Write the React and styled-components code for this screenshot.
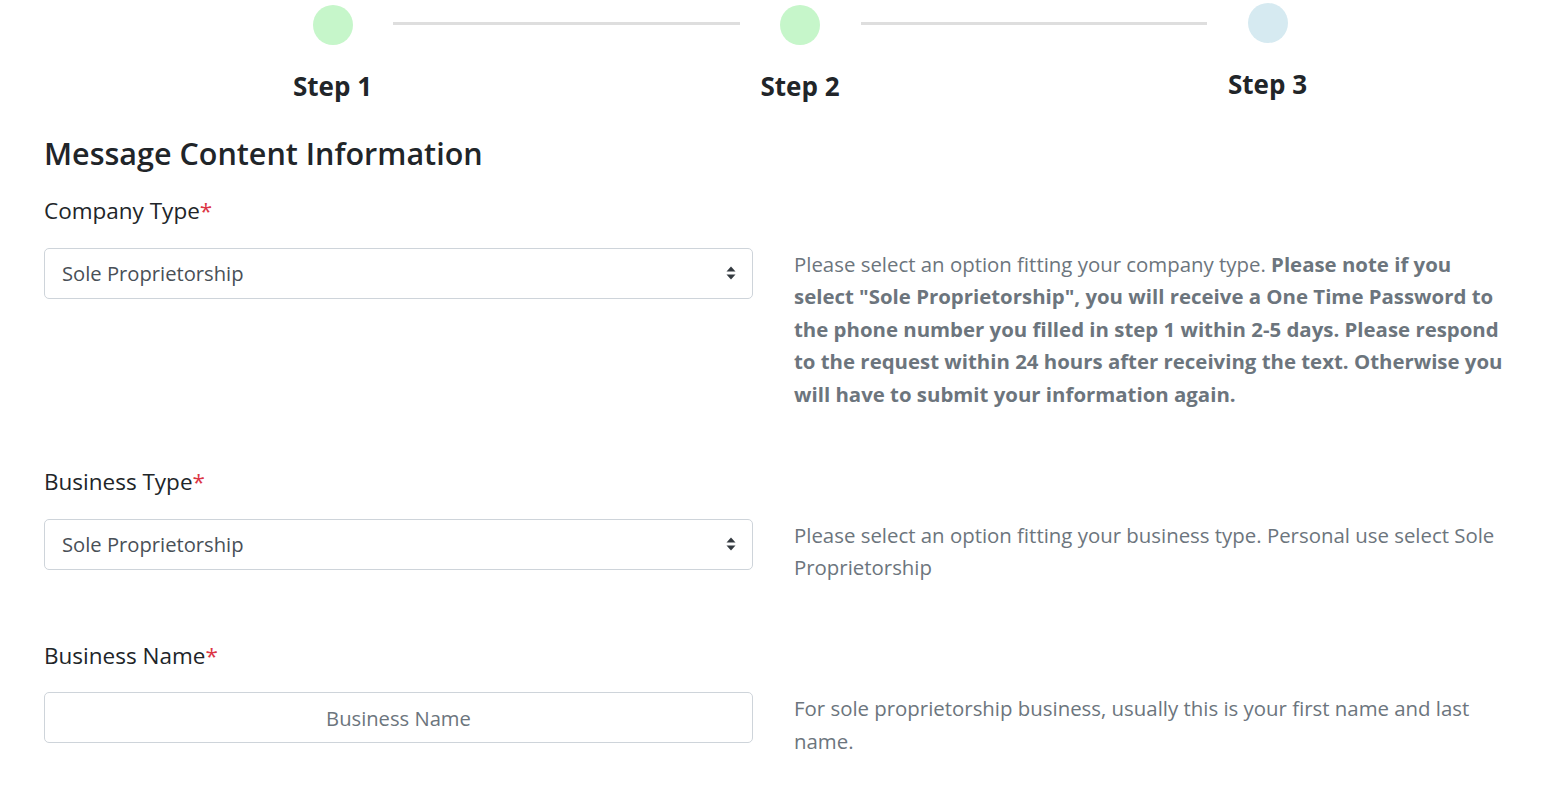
import React from "react";
import styled, { createGlobalStyle } from "styled-components";

const Global = createGlobalStyle`
  html, body { margin: 0; padding: 0; background: #fff; }
  body {
    font-family: "Open Sans", "Noto Sans", "Liberation Sans", sans-serif;
    color: #212529;
  }
  * { box-sizing: border-box; }
`;

const Page = styled.div`
  padding: 0 44px 40px 44px;
`;

const Stepper = styled.div`
  display: flex;
  align-items: flex-start;
  margin-left: 228px;
  width: 1056px;
`;

const StepItem = styled.div`
  width: 121px;
  flex: none;
  display: flex;
  flex-direction: column;
  align-items: center;
  padding-top: ${(p) => (p.$raised ? 3 : 5)}px;
`;

const Circle = styled.div`
  width: 40px;
  height: 40px;
  border-radius: 50%;
  background: ${(p) => p.$color};
`;

const StepLabel = styled.div`
  margin-top: 24px;
  font-size: 26px;
  font-weight: 700;
  line-height: 34px;
  color: #212529;
`;

const Connector = styled.div`
  flex: 1;
  height: 3px;
  margin-top: 22px;
  background: #dedede;
`;

const Heading = styled.h3`
  margin: 28px 0 20px 0;
  font-size: 30.5px;
  font-weight: 600;
  line-height: 44px;
  color: #212529;
`;

const Group = styled.div`
  margin-bottom: 56px;
`;

const Label = styled.label`
  display: block;
  font-size: 22.5px;
  line-height: 32px;
  color: #212529;
  margin-bottom: 20.5px;
`;

const Required = styled.span`
  color: #dc3545;
`;

const Row = styled.div`
  display: grid;
  grid-template-columns: 709px 711px;
  column-gap: 41px;
  align-items: start;
`;

const SelectBox = styled.div`
  height: 51px;
  border: 1px solid #ced4da;
  border-radius: 5px;
  display: flex;
  align-items: center;
  justify-content: space-between;
  padding: 0 16px 0 17px;
  font-size: 20.2px;
  color: #495057;
  background: #fff;
`;

const InputBox = styled.div`
  height: 51px;
  border: 1px solid #ced4da;
  border-radius: 5px;
  display: flex;
  align-items: center;
  justify-content: center;
  font-size: 20.2px;
  color: #6c757d;
  background: #fff;
`;

const Help = styled.p`
  margin: 0;
  font-size: 20.4px;
  line-height: 32.5px;
  color: #6c757d;
  white-space: nowrap;

  b {
    font-weight: 700;
  }
`;

const Arrows = () => (
  <svg width="10" height="14" viewBox="0 0 10 14">
    <path d="M5 0.5 L9.5 5.5 L0.5 5.5 Z" fill="#343a40" />
    <path d="M5 13.5 L9.5 8.5 L0.5 8.5 Z" fill="#343a40" />
  </svg>
);

export default function App() {
  return (
    <>
      <Global />
      <Page>
        <Stepper>
          <StepItem>
            <Circle $color="#c6f6ca" />
            <StepLabel>Step 1</StepLabel>
          </StepItem>
          <Connector />
          <StepItem>
            <Circle $color="#c6f6ca" />
            <StepLabel>Step 2</StepLabel>
          </StepItem>
          <Connector />
          <StepItem $raised>
            <Circle $color="#d6eaf1" />
            <StepLabel>Step 3</StepLabel>
          </StepItem>
        </Stepper>

        <Heading>Message Content Information</Heading>

        <Group>
          <Label>
            Company Type<Required>*</Required>
          </Label>
          <Row>
            <SelectBox>
              <span>Sole Proprietorship</span>
              <Arrows />
            </SelectBox>
            <Help>
              Please select an option fitting your company type.{" "}
              <b>Please note if you</b>
              <br />
              <b>select "Sole Proprietorship", you will receive a One Time Password to</b>
              <br />
              <b>the phone number you filled in step 1 within 2-5 days. Please respond</b>
              <br />
              <b>to the request within 24 hours after receiving the text. Otherwise you</b>
              <br />
              <b>will have to submit your information again.</b>
            </Help>
          </Row>
        </Group>

        <Group>
          <Label>
            Business Type<Required>*</Required>
          </Label>
          <Row>
            <SelectBox>
              <span>Sole Proprietorship</span>
              <Arrows />
            </SelectBox>
            <Help>
              Please select an option fitting your business type. Personal use select Sole
              <br />
              Proprietorship
            </Help>
          </Row>
        </Group>

        <Group>
          <Label>
            Business Name<Required>*</Required>
          </Label>
          <Row>
            <InputBox>Business Name</InputBox>
            <Help>
              For sole proprietorship business, usually this is your first name and last
              <br />
              name.
            </Help>
          </Row>
        </Group>
      </Page>
    </>
  );
}
